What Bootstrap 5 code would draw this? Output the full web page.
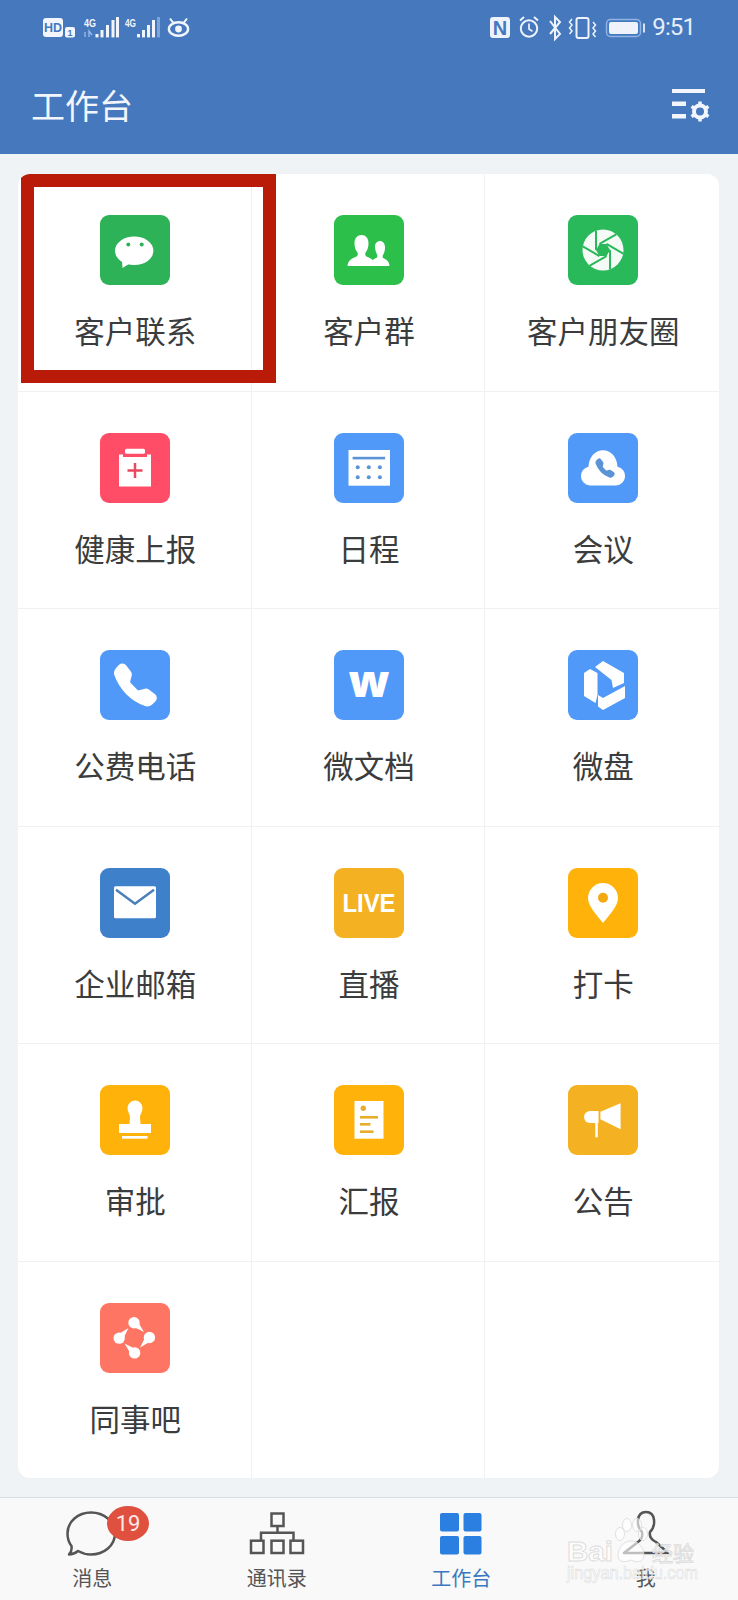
<!DOCTYPE html>
<html lang="zh-CN">
<head>
<meta charset="utf-8">
<title>工作台</title>
<link href="https://cdn.jsdelivr.net/npm/bootstrap@5.3.0/dist/css/bootstrap.min.css" rel="stylesheet">
<style>
  html, body { height: 1600px; margin: 0; }
  body {
    background: #f0f3f5;
    font-family: "Noto Sans CJK SC", "Noto Sans", sans-serif;
    overflow: hidden;
  }
  .wk-head { height: 154px; background: #4578bd; color: #f2f6fc; }
  .wk-status { height: 50px; padding: 5px 43px 0 30px; }
  .wk-time { font: 400 24px/1 Roboto, sans-serif; letter-spacing: -.9px; color: #e6eefa; padding-top: 10px; margin-left: 2px; }
  .wk-title-row { padding: 30px 28px 0 31px; }
  .wk-title { font-size: 34px; line-height: 50px; font-weight: 400; margin: 0; }
  .wk-board { margin: 20px 19px 19px 18px; border: 0; border-radius: 12px; overflow: hidden; background: #fff; height: 1304px; }
  .wk-cell {
    height: 217.6px; padding: 41px 0 0 2px; position: relative;
    border-right: 1px solid #f1f1f1; border-bottom: 1px solid #f1f1f1;
    color: #3a3c3e; font-size: 30.5px; line-height: 44px; text-align: center;
  }
  .wk-cell.wk-endcol { border-right: 0; }
  .wk-cell.wk-endrow { border-bottom: 0; }
  .wk-cell svg.wk-app { display: block; margin: 0 auto 23px; }
  .wk-callout {
    position: absolute; left: 3px; top: 0; width: 255px; height: 209px;
    border: 13.5px solid #ba1b08; pointer-events: none;
  }
  .wk-tabs { height: 103px; background: #f9f9f9; border-top: 1px solid #d8dde2; position: relative; }
  .wk-tab { width: 25%; padding-top: 12px; color: #555; font-size: 20px; line-height: 24px; text-align: center; position: relative; }
  .wk-tab svg { display: block; margin: 0 auto 6px; }
  .wk-tab.wk-on { color: #3a78c0; }
  .wk-count {
    position: absolute; left: 107px; top: 8px; width: 42px; height: 35px; border-radius: 50%;
    background: #e0503f; color: #fbe9e6; font: 400 22px/35px Roboto, sans-serif; text-align: center;
  }
  .wk-stamp { position: absolute; left: 560px; top: 20px; pointer-events: none; }
</style>
</head>
<body>
<header class="wk-head">
  <div class="wk-status d-flex justify-content-between align-items-start">
    <svg width="180" height="45" viewBox="30 5 180 45" fill="#f2f6fc">
      <rect x="43" y="18" width="20" height="19" rx="3"/>
      <text x="53" y="32" font-family="Liberation Sans" font-weight="700" font-size="12.5" text-anchor="middle" fill="#4578bd">HD</text>
      <rect x="65" y="27" width="10" height="10.5" rx="2"/>
      <text x="70" y="36" font-family="Liberation Sans" font-weight="700" font-size="9" text-anchor="middle" fill="#4578bd">1</text>
      <text x="84" y="26.500" font-family="Liberation Sans" font-weight="700" font-size="11" textLength="12" lengthAdjust="spacingAndGlyphs">4G</text>
      <path d="M85 37v-5M89 37v-6l3 4" stroke="#9dbde6" stroke-width="1.3" fill="none"/>
      <rect x="95.500" y="34" width="3" height="3.400"/><rect x="100.500" y="30" width="3" height="7.400"/><rect x="106" y="25" width="3" height="12.400"/><rect x="111.500" y="20" width="3" height="17.400"/><rect x="116" y="17" width="3" height="20.400"/>
      <text x="125" y="26.500" font-family="Liberation Sans" font-weight="700" font-size="11" textLength="11" lengthAdjust="spacingAndGlyphs">4G</text>
      <rect x="137" y="34" width="3" height="3.400"/><rect x="142" y="30" width="3" height="7.400"/><rect x="147" y="25" width="3" height="12.400"/><rect x="152" y="20" width="3" height="17.400"/><rect x="157" y="17" width="3" height="20.400" fill="#7da5da"/>
      <g fill="none" stroke="#f2f6fc" stroke-width="2.400">
        <ellipse cx="178.500" cy="29" rx="9.600" ry="6.800"/>
        <path d="M170 18.500l3.500 4.600M187 18.500l-3.500 4.600" stroke-width="2"/>
      </g>
      <circle cx="178.500" cy="29" r="3.400"/>
    </svg>
    <div class="d-flex align-items-start">
      <svg width="170" height="45" viewBox="480 5 170 45" fill="none" stroke="#eef3fb">
        <rect x="490" y="17" width="20" height="21" rx="3" fill="#eef3fb" stroke="none"/>
        <text x="500" y="34.500" font-family="Liberation Sans" font-weight="700" font-size="20" text-anchor="middle" fill="#4578bd" stroke="none">N</text>
        <circle cx="529" cy="28.500" r="8.200" stroke-width="2"/>
        <path d="M529 23.500v5.500l3.500 2.400" stroke-width="1.700"/>
        <path d="M520 20.500l4-3.500M538 20.500l-4-3.500" stroke-width="2"/>
        <path d="M550 21l10 13-5 5V17l5 5-10 12" stroke-width="2"/>
        <rect x="576.500" y="18" width="12" height="20" rx="2" stroke-width="2"/>
        <path d="M572 19l-2.500 3 2.500 3-2.500 3 2.500 3-2.500 3M593 22l2.500 3-2.500 3 2.500 3-2.500 3 2.500 3" stroke-width="1.500"/>
        <rect x="606.500" y="19.500" width="34" height="17" rx="4" stroke="#8fb3e2" stroke-width="1.500"/>
        <rect x="609" y="22" width="29" height="12" rx="2" fill="#eef3fb" stroke="none"/>
        <rect x="643" y="23.500" width="2" height="9" fill="#d8e4f5" stroke="none"/>
      </svg>
      <span class="wk-time">9:51</span>
    </div>
  </div>
  <div class="wk-title-row d-flex justify-content-between align-items-center">
    <h1 class="wk-title">工作台</h1>
    <svg width="38" height="33" viewBox="672 90 38 33" fill="#f2f6fc">
      <rect x="672" y="90" width="33" height="4"/>
      <rect x="672" y="102.500" width="14" height="4.500"/>
      <rect x="672" y="115" width="14" height="4.500"/>
      <g fill="none" stroke="#f2f6fc">
        <circle cx="700" cy="112.500" r="6" stroke-width="4"/>
        <path d="M700 102.500v3.500M700 119v3.500M691.500 107.500l3 1.800M705.500 115.700l3 1.800M691.500 117.500l3-1.800M705.500 109.300l3-1.800" stroke-width="3.500"/>
      </g>
    </svg>
  </div>
</header>

<main class="card wk-board">
  <div class="row g-0">
    <div class="col-4 wk-cell">
      <svg class="wk-app" width="70" height="70" viewBox="0 0 70 70">
        <rect width="70" height="70" rx="9" fill="#2eb257"/>
        <ellipse cx="34.200" cy="35.800" rx="19.200" ry="14.300" fill="#fff"/>
        <path d="M22 46l.5 7 8-5z" fill="#fff"/>
        <circle cx="28.300" cy="29.500" r="2" fill="#2eb257"/><circle cx="41.700" cy="29.500" r="2" fill="#2eb257"/>
      </svg>
      客户联系
      <span class="wk-callout"></span>
    </div>
    <div class="col-4 wk-cell">
      <svg class="wk-app" width="70" height="70" viewBox="0 0 70 70">
        <rect width="70" height="70" rx="9" fill="#2cc04a"/>
        <path d="M13.500 51c.5-5 3-7 8-9 2.500-1 3-3 1.500-5-2-3-2.500-6-2.500-9 0-5 3-8 7-8s7 3 7 8c0 3-.5 6-2.500 9-1.500 2-1 4 1.500 5 5 2 7.500 4 8 9z" fill="#fff"/>
        <path d="M39 51h16.500c-.3-4-2-6-5.500-7.500-1.500-.7-1.800-2-1-3.500 1.500-2.500 2-5 2-7.500 0-4-2.200-6.500-5-6.500s-5 2.300-5 5.500c0 3 1 6 2 8 .8 1.600.3 3-1 3.600-1.500.7-2.500 1.300-3.200 2 .8 1.800.7 4 .7 6.400z" fill="#fff"/>
      </svg>
      客户群
    </div>
    <div class="col-4 wk-cell wk-endcol">
      <svg class="wk-app" width="70" height="70" viewBox="0 0 70 70">
        <rect width="70" height="70" rx="9" fill="#2ab95a"/>
        <circle cx="35" cy="35" r="20.500" fill="#f4fbf6"/>
        <g stroke="#2ab95a" stroke-width="2">
          <path d="M42 35L42 54.300M38.500 41.100L21.800 50.700M31.500 41.100L14.800 31.400M28 35L28 15.700M31.500 28.900L48.200 19.300M38.500 28.900L55.200 38.600"/>
        </g>
        <path d="M42 35l-3.500 6.100h-7L28 35l3.500-6.100h7z" fill="#2ab95a"/>
      </svg>
      客户朋友圈
    </div>

    <div class="col-4 wk-cell">
      <svg class="wk-app" width="70" height="70" viewBox="0 0 70 70">
        <rect width="70" height="70" rx="9" fill="#ff4d67"/>
        <rect x="25" y="15.700" width="20" height="5" rx="1.500" fill="#fff"/>
        <path d="M19 21.500h4v2.500h24v-2.500h4v32H19z" fill="#fff"/>
        <path d="M35 30v15M27.500 37.500h15" stroke="#e8495f" stroke-width="2.500"/>
      </svg>
      健康上报
    </div>
    <div class="col-4 wk-cell">
      <svg class="wk-app" width="70" height="70" viewBox="0 0 70 70">
        <rect width="70" height="70" rx="9" fill="#5199f8"/>
        <rect x="14.500" y="17" width="41.500" height="35.700" fill="#fff"/>
        <rect x="18.600" y="23.800" width="32.500" height="2.600" fill="#5a93d6"/>
        <g fill="#5a93d6">
          <circle cx="23.700" cy="34.300" r="2"/><circle cx="34.800" cy="34.300" r="2"/><circle cx="45.900" cy="34.300" r="2"/>
          <circle cx="23.700" cy="44.300" r="2"/><circle cx="34.800" cy="44.300" r="2"/><circle cx="45.900" cy="44.300" r="2"/>
        </g>
      </svg>
      日程
    </div>
    <div class="col-4 wk-cell wk-endcol">
      <svg class="wk-app" width="70" height="70" viewBox="0 0 70 70">
        <rect width="70" height="70" rx="9" fill="#5199f8"/>
        <path d="M22 52.500a9.500 9.500 0 0 1-1.500-18.800C21 24 27 17.300 35 17.300s14 6.700 14.500 16.400a9.500 9.500 0 0 1-1.500 18.800z" fill="#fff"/>
        <g transform="translate(27.500 25.500) scale(1.200)"><path fill="#5a93d6" d="M1.885.511a1.745 1.745 0 0 1 2.610.163L6.290 2.980c.329.423.445.974.315 1.494l-.547 2.190a.678.678 0 0 0 .178.643l2.457 2.457a.678.678 0 0 0 .644.178l2.189-.547a1.745 1.745 0 0 1 1.494.315l2.306 1.794c.829.645.905 1.870.163 2.611l-1.034 1.034c-.740.740-1.846 1.065-2.877.702a18.634 18.634 0 0 1-7.010-4.420 18.634 18.634 0 0 1-4.420-7.009c-.362-1.030-.037-2.137.703-2.877L1.885.511z"/></g>
      </svg>
      会议
    </div>

    <div class="col-4 wk-cell">
      <svg class="wk-app" width="70" height="70" viewBox="0 0 70 70">
        <rect width="70" height="70" rx="9" fill="#5199f8"/>
        <g transform="translate(14 13.500) scale(2.680)"><path fill="#fff" d="M1.885.511a1.745 1.745 0 0 1 2.610.163L6.290 2.980c.329.423.445.974.315 1.494l-.547 2.190a.678.678 0 0 0 .178.643l2.457 2.457a.678.678 0 0 0 .644.178l2.189-.547a1.745 1.745 0 0 1 1.494.315l2.306 1.794c.829.645.905 1.870.163 2.611l-1.034 1.034c-.740.740-1.846 1.065-2.877.702a18.634 18.634 0 0 1-7.010-4.420 18.634 18.634 0 0 1-4.420-7.009c-.362-1.030-.037-2.137.703-2.877L1.885.511z"/></g>
      </svg>
      公费电话
    </div>
    <div class="col-4 wk-cell">
      <svg class="wk-app" width="70" height="70" viewBox="0 0 70 70">
        <rect width="70" height="70" rx="9" fill="#5199f8"/>
        <text x="35" y="47" font-family="Open Sans" font-weight="800" font-size="44" text-anchor="middle" fill="#fff" textLength="41" lengthAdjust="spacingAndGlyphs">w</text>
      </svg>
      微文档
    </div>
    <div class="col-4 wk-cell wk-endcol">
      <svg class="wk-app" width="70" height="70" viewBox="0 0 70 70">
        <rect width="70" height="70" rx="9" fill="#5199f8"/>
        <g fill="#fff">
          <path d="M27 17l8-6 21 12v10l-11 5-1.500-8z"/>
          <path d="M16 23l6-4 7.500 4v22l-2 8L16 46z"/>
          <path d="M30 45l5 3 22-12v12L35 60l-5-3.500z"/>
        </g>
      </svg>
      微盘
    </div>

    <div class="col-4 wk-cell">
      <svg class="wk-app" width="70" height="70" viewBox="0 0 70 70">
        <rect width="70" height="70" rx="9" fill="#3f80cb"/>
        <rect x="14" y="18.300" width="42" height="32" rx="1.500" fill="#fff"/>
        <path d="M16 21.700l19 14 19-14" fill="none" stroke="#4a7fb8" stroke-width="2.500"/>
      </svg>
      企业邮箱
    </div>
    <div class="col-4 wk-cell">
      <svg class="wk-app" width="70" height="70" viewBox="0 0 70 70">
        <rect width="70" height="70" rx="9" fill="#f4b223"/>
        <text x="35" y="44" font-family="Liberation Sans" font-weight="700" font-size="25" text-anchor="middle" fill="#fff" textLength="53" lengthAdjust="spacingAndGlyphs">LIVE</text>
      </svg>
      直播
    </div>
    <div class="col-4 wk-cell wk-endcol">
      <svg class="wk-app" width="70" height="70" viewBox="0 0 70 70">
        <rect width="70" height="70" rx="9" fill="#ffb20a"/>
        <path d="M35 55C28 46 20 38 20 30a15 15 0 0 1 30 0c0 8-8 16-15 25z" fill="#fff"/>
        <circle cx="35" cy="29.700" r="5" fill="#f3a90f"/>
      </svg>
      打卡
    </div>

    <div class="col-4 wk-cell">
      <svg class="wk-app" width="70" height="70" viewBox="0 0 70 70">
        <rect width="70" height="70" rx="9" fill="#ffb20a"/>
        <path d="M27.500 23a7.500 7.500 0 0 1 15 0c0 4-2.500 6-2.500 9 0 2 .5 5 .5 7h-11c0-2 .5-5 .5-7 0-3-2.500-5-2.500-9z" fill="#fff"/>
        <rect x="19" y="39" width="32" height="9" fill="#fff"/>
        <rect x="22" y="51" width="25.500" height="2.700" fill="#fff"/>
      </svg>
      审批
    </div>
    <div class="col-4 wk-cell">
      <svg class="wk-app" width="70" height="70" viewBox="0 0 70 70">
        <rect width="70" height="70" rx="9" fill="#ffb20a"/>
        <rect x="20.500" y="16" width="29" height="37.700" fill="#fff"/>
        <circle cx="29.300" cy="23.300" r="2.700" fill="#e9ad2c"/>
        <g fill="#e9ad2c">
          <rect x="26" y="31" width="18" height="2.600"/><rect x="26" y="38" width="10.400" height="2.600"/><rect x="26" y="45.400" width="13.500" height="2.600"/>
        </g>
      </svg>
      汇报
    </div>
    <div class="col-4 wk-cell wk-endcol">
      <svg class="wk-app" width="70" height="70" viewBox="0 0 70 70">
        <rect width="70" height="70" rx="9" fill="#f4b223"/>
        <path d="M32.400 26.700l20.200-8.400v26l-20.200-10z" fill="#fff"/>
        <path d="M30.500 26H22a6 6 0 0 0 0 12h8.500z" fill="#fff"/>
        <rect x="27.300" y="37" width="2.500" height="15.300" fill="#fff"/>
      </svg>
      公告
    </div>

    <div class="col-4 wk-cell wk-endrow">
      <svg class="wk-app" width="70" height="70" viewBox="0 0 70 70">
        <rect width="70" height="70" rx="9" fill="#ff7563"/>
        <g fill="#fff">
          <g><circle cx="34" cy="19.700" r="5.700"/><path d="M31.300 22.700L36.700 16.700 44 29z"/></g>
          <g transform="rotate(90 34.300 34.800)"><circle cx="34" cy="19.700" r="5.700"/><path d="M31.300 22.700L36.700 16.700 44 29z"/></g>
          <g transform="rotate(180 34.300 34.800)"><circle cx="34" cy="19.700" r="5.700"/><path d="M31.300 22.700L36.700 16.700 44 29z"/></g>
          <g transform="rotate(270 34.300 34.800)"><circle cx="34" cy="19.700" r="5.700"/><path d="M31.300 22.700L36.700 16.700 44 29z"/></g>
        </g>
      </svg>
      同事吧
    </div>
    <div class="col-4 wk-cell wk-endrow"></div>
    <div class="col-4 wk-cell wk-endrow wk-endcol"></div>
  </div>
</main>

<nav class="wk-tabs d-flex">
  <div class="wk-tab">
    <svg width="60" height="50" viewBox="0 0 60 50" fill="none" stroke="#555" stroke-width="2.500">
      <path d="M9.500 36C6.800 32.500 5.500 28 5.500 23.500 5.500 11.500 16 2.500 29 2.500S53 11.500 53 23.500 42 44.500 29 44.500c-5 0-9.500-1.500-13-3.500-3 2.500-6 3.500-9 3.500 2-2 3-5 2.500-8.500z" stroke-linejoin="round"/>
    </svg>
    消息
  </div>
  <div class="wk-tab">
    <svg width="60" height="50" viewBox="0 0 60 50" fill="none" stroke="#555" stroke-width="2.500">
      <rect x="24.500" y="3.500" width="12" height="12.500"/>
      <path d="M30.500 16v6.700M14 30v-7.300h32.500V30"/>
      <rect x="4" y="30.700" width="12.500" height="12.300"/>
      <rect x="24.500" y="30.700" width="12" height="12.300"/>
      <rect x="43.500" y="30.700" width="12.500" height="12.300"/>
    </svg>
    通讯录
  </div>
  <div class="wk-tab wk-on">
    <svg width="60" height="50" viewBox="0 0 60 50" fill="#2a7fe0">
      <rect x="9" y="3" width="19" height="18.500" rx="2"/><rect x="32.500" y="3" width="18" height="18.500" rx="2"/>
      <rect x="9" y="26" width="19" height="18.500" rx="2"/><rect x="32.500" y="26" width="18" height="18.500" rx="2"/>
    </svg>
    工作台
  </div>
  <div class="wk-tab">
    <svg width="60" height="50" viewBox="0 0 60 50" fill="none" stroke="#555" stroke-width="2.500" stroke-linejoin="round">
      <path d="M26 22C20 16 20 2 30 2c10 0 10 14 4 20-1 5 2 8 6 10l12 11H8l14-11c3-2 5-5 4-10z"/>
    </svg>
    我
  </div>
  <span class="wk-count">19</span>
  <svg class="wk-stamp" width="142" height="70" viewBox="0 -20 142 70">
    <g fill="#fff" fill-opacity=".62" stroke="#dcdcdc" stroke-width=".9">
      <text x="7" y="23" font-family="Liberation Sans" font-weight="700" font-size="28" textLength="46" lengthAdjust="spacingAndGlyphs">Bai</text>
      <ellipse cx="60" cy="-4" rx="4.500" ry="6.500"/><ellipse cx="67" cy="-13" rx="4.500" ry="6.500"/><ellipse cx="77" cy="-13" rx="4.500" ry="6.500"/><ellipse cx="83" cy="-4" rx="4.500" ry="6.500"/>
      <path d="M58 18c0-10 7-15 13-15s13 5 13 15c0 6-7 7-13 4-6 3-13 2-13-4z"/>
      <text x="92" y="23" font-family="Noto Sans CJK SC" font-size="21">经验</text>
    </g>
    <text x="7" y="41" font-family="Liberation Sans" font-size="18" fill="#fff" fill-opacity=".5" stroke="#dedede" stroke-width=".6" textLength="131" lengthAdjust="spacingAndGlyphs">jingyan.baidu.com</text>
  </svg>
</nav>
<script src="https://cdn.jsdelivr.net/npm/bootstrap@5.3.0/dist/js/bootstrap.bundle.min.js"></script>
</body>
</html>
